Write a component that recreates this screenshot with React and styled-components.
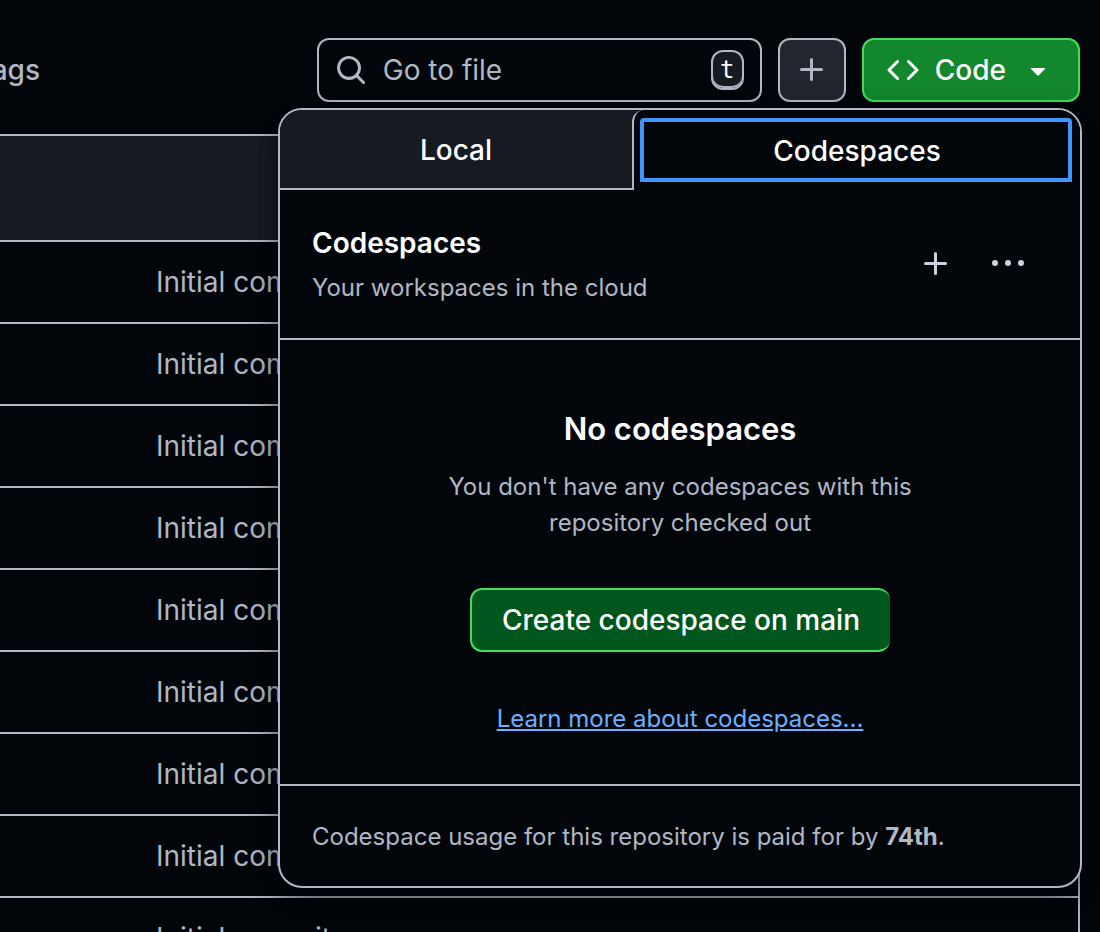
import React from 'react';
import styled, { createGlobalStyle, css } from 'styled-components';

const c = {
  canvas: '#02060b',
  subtle: '#161b22',
  control: '#22262f',
  border: '#b1b7c3',
  muted: '#b1b7c3',
  text: '#ffffff',
  accent: '#3d95ff',
  link: '#6cb0ff',
  green: '#13872d',
  greenDark: '#00571d',
  greenBorder: '#43dc5c',
};

const GlobalStyle = createGlobalStyle`
  *, *::before, *::after { box-sizing: border-box; }
  body {
    margin: 0;
    background: ${c.canvas};
    color: ${c.text};
    font-family: Inter, "Liberation Sans", sans-serif;
    font-size: 28px;
    line-height: 42px;
  }
  button, input { font: inherit; color: inherit; }
  button { cursor: pointer; }
  h2, h3, p { margin: 0; }
`;

const Page = styled.main`
  height: 100vh;
  overflow: hidden;
  padding: 38px 20px 0 0;
`;

const Toolbar = styled.header`
  display: flex;
  align-items: center;
  gap: 16px;
  margin-bottom: 32px;
`;

const RefLinks = styled.nav`
  display: flex;
  justify-content: flex-end;
  width: 40px;
  margin-right: auto;
  overflow: hidden;
`;

const RefLink = styled.a`
  color: ${c.muted};
  font-weight: 500;
  text-decoration: none;
`;

const SearchBox = styled.label`
  display: flex;
  align-items: center;
  gap: 16px;
  flex: 0 1 445px;
  min-width: 0;
  height: 64px;
  padding: 0 16px;
  border: 2px solid ${c.border};
  border-radius: 12px;
  color: ${c.muted};
`;

const SearchInput = styled.input`
  flex: 1;
  min-width: 0;
  padding: 0;
  border: 0;
  outline: 0;
  background: transparent;
  &::placeholder { color: ${c.muted}; opacity: 1; }
`;

const Key = styled.kbd`
  width: 33px;
  height: 40px;
  border: 2px solid ${c.border};
  border-radius: 12px;
  background: ${c.subtle};
  box-shadow: inset 0 -2px 0 ${c.border};
  color: ${c.text};
  font-family: "DejaVu Sans Mono", monospace;
  font-size: 24px;
  line-height: 36px;
  text-align: center;
`;

const buttonPadding = { primary: '0 24px 0 23px', create: '0 30px' };

const Button = styled.button`
  display: inline-flex;
  align-items: center;
  justify-content: center;
  gap: 16px;
  height: 64px;
  padding: ${(p) => buttonPadding[p.$variant] || '0 16px'};
  border: 2px solid ${c.border};
  border-radius: 12px;
  background: ${c.control};
  color: ${c.muted};
  font-weight: 500;
  white-space: nowrap;
  ${(p) => p.$variant === 'primary' && css`
    background: ${c.green};
    border-color: ${c.greenBorder};
    color: ${c.text};
  `}
  ${(p) => p.$variant === 'create' && css`
    background: ${c.greenDark};
    border-color: ${c.greenBorder};
    border-right-width: 0;
    color: ${c.text};
  `}
`;

const IconButton = styled.button`
  display: grid;
  place-items: center;
  width: 64px;
  height: 64px;
  padding: 0;
  border: 0;
  border-radius: 12px;
  background: transparent;
  color: #cdd2dc;
`;

const Glyph = styled.svg`
  display: block;
  flex: none;
  width: 32px;
  height: 32px;
  fill: currentColor;
`;

const CodeMenu = styled.div`
  position: relative;
`;

const Popover = styled.section`
  position: absolute;
  z-index: 1;
  top: 70px;
  right: -2px;
  width: 804px;
  overflow: hidden;
  border: 2px solid ${c.border};
  border-radius: 24px;
  background: ${c.canvas};
  box-shadow: 0 12px 24px -6px rgba(1, 4, 9, 0.4), 0 12px 36px 0 rgba(1, 4, 9, 0.4);
`;

const TabList = styled.div`
  display: flex;
  background: ${c.subtle};
`;

const Tab = styled.button`
  width: ${(p) => p.$width};
  height: 80px;
  padding: 2px 0 0;
  border: 0 solid ${c.border};
  border-bottom-width: 2px;
  background: transparent;
  font-weight: 500;
  &[aria-selected='true'] {
    border-width: 0 0 0 2px;
    border-radius: 12px 12px 0 0;
    background: ${c.canvas};
    outline: 4px solid ${c.accent};
    outline-offset: -12px;
  }
`;

const PanelHeader = styled.div`
  display: flex;
  align-items: center;
  justify-content: space-between;
  padding: 32px 40px 32px 32px;
  border-bottom: 2px solid ${c.border};
`;

const PanelTitle = styled.h2`
  margin-bottom: 6px;
  font-size: 28px;
  line-height: 42px;
  font-weight: 600;
`;

const Small = styled.p`
  color: ${c.muted};
  font-size: 24px;
  line-height: 36px;
`;

const Actions = styled.div`
  display: flex;
  gap: 8px;
`;

const BlankState = styled.div`
  display: flex;
  flex-direction: column;
  align-items: center;
  padding: 65px 32px 47px;
  text-align: center;
`;

const BlankTitle = styled.h3`
  margin-bottom: 16px;
  font-size: 31px;
  line-height: 48px;
  font-weight: 600;
`;

const BlankText = styled(Small)`
  max-width: 480px;
  margin-bottom: 47px;
`;

const LearnMore = styled.a`
  margin-top: 49px;
  color: ${c.link};
  font-size: 24px;
  line-height: 36px;
  text-decoration: underline;
`;

const PanelFooter = styled.footer`
  padding: 33px 32px 31px;
  border-top: 2px solid ${c.border};
`;

const FileTable = styled.table`
  width: 100%;
  border-spacing: 0;
  border: 2px solid ${c.border};
  border-width: 2px 2px 0 0;
  border-radius: 0 12px 0 0;
`;

const HeadCell = styled.th`
  height: 106px;
  padding: 0;
  border-bottom: 2px solid ${c.border};
  background: ${c.subtle};
`;

const MessageCell = styled.td`
  height: 82px;
  padding: 0 0 0 156px;
  border-bottom: 2px solid ${c.border};
  color: ${c.muted};
`;

const paths = {
  search: 'M10.68 11.74a6 6 0 0 1-7.922-8.982 6 6 0 0 1 8.982 7.922l3.04 3.04a.749.749 0 0 1-.326 1.275.749.749 0 0 1-.734-.215ZM11.5 7a4.499 4.499 0 1 0-8.997 0A4.499 4.499 0 0 0 11.5 7Z',
  plus: 'M7.75 2a.75.75 0 0 1 .75.75V7h4.25a.75.75 0 0 1 0 1.5H8.5v4.25a.75.75 0 0 1-1.5 0V8.5H2.75a.75.75 0 0 1 0-1.5H7V2.75A.75.75 0 0 1 7.75 2Z',
  code: 'm11.28 3.22 4.25 4.25a.75.75 0 0 1 0 1.06l-4.25 4.25a.749.749 0 0 1-1.275-.326.749.749 0 0 1 .215-.734L13.94 8l-3.72-3.72a.749.749 0 0 1 .326-1.275.749.749 0 0 1 .734.215Zm-6.56 0a.751.751 0 0 1 1.042.018.751.751 0 0 1 .018 1.042L2.06 8l3.72 3.72a.749.749 0 0 1-.326 1.275.749.749 0 0 1-.734-.215L.47 8.53a.75.75 0 0 1 0-1.06Z',
  caret: 'm4.427 7.427 3.396 3.396a.25.25 0 0 0 .354 0l3.396-3.396A.25.25 0 0 0 11.396 7H4.604a.25.25 0 0 0-.177.427Z',
  kebab: 'M8 9a1.5 1.5 0 1 0 0-3 1.5 1.5 0 0 0 0 3ZM1.5 9a1.5 1.5 0 1 0 0-3 1.5 1.5 0 0 0 0 3Zm13 0a1.5 1.5 0 1 0 0-3 1.5 1.5 0 0 0 0 3Z',
};

const Icon = ({ name }) => (
  <Glyph viewBox="0 0 16 16" aria-hidden="true">
    <path d={paths[name]} />
  </Glyph>
);

const messages = Array.from({ length: 9 }, () => 'Initial commit');

export default function App() {
  return (
    <Page>
      <GlobalStyle />
      <Toolbar>
        <RefLinks>
          <RefLink href="#tags">Tags</RefLink>
        </RefLinks>
        <SearchBox>
          <Icon name="search" />
          <SearchInput type="text" placeholder="Go to file" aria-label="Go to file" />
          <Key>t</Key>
        </SearchBox>
        <Button type="button" aria-label="Add file">
          <Icon name="plus" />
        </Button>
        <CodeMenu>
          <Button type="button" $variant="primary" aria-expanded="true">
            <Icon name="code" />
            Code
            <Icon name="caret" />
          </Button>
          <Popover aria-label="Code">
            <TabList role="tablist">
              <Tab type="button" role="tab" aria-selected="false" $width="44%">Local</Tab>
              <Tab type="button" role="tab" aria-selected="true" $width="56%">Codespaces</Tab>
            </TabList>
            <PanelHeader>
              <div>
                <PanelTitle>Codespaces</PanelTitle>
                <Small>Your workspaces in the cloud</Small>
              </div>
              <Actions>
                <IconButton type="button" aria-label="Create a codespace">
                  <Icon name="plus" />
                </IconButton>
                <IconButton type="button" aria-label="More options">
                  <Icon name="kebab" />
                </IconButton>
              </Actions>
            </PanelHeader>
            <BlankState>
              <BlankTitle>No codespaces</BlankTitle>
              <BlankText>You don't have any codespaces with this repository checked out</BlankText>
              <Button type="button" $variant="create">Create codespace on main</Button>
              <LearnMore href="#codespaces">Learn more about codespaces...</LearnMore>
            </BlankState>
            <PanelFooter>
              <Small>
                Codespace usage for this repository is paid for by <strong>74th</strong>.
              </Small>
            </PanelFooter>
          </Popover>
        </CodeMenu>
      </Toolbar>
      <FileTable>
        <thead>
          <tr>
            <HeadCell scope="col" aria-label="Last commit message" />
          </tr>
        </thead>
        <tbody>
          {messages.map((message, i) => (
            <tr key={i}>
              <MessageCell>{message}</MessageCell>
            </tr>
          ))}
        </tbody>
      </FileTable>
    </Page>
  );
}
